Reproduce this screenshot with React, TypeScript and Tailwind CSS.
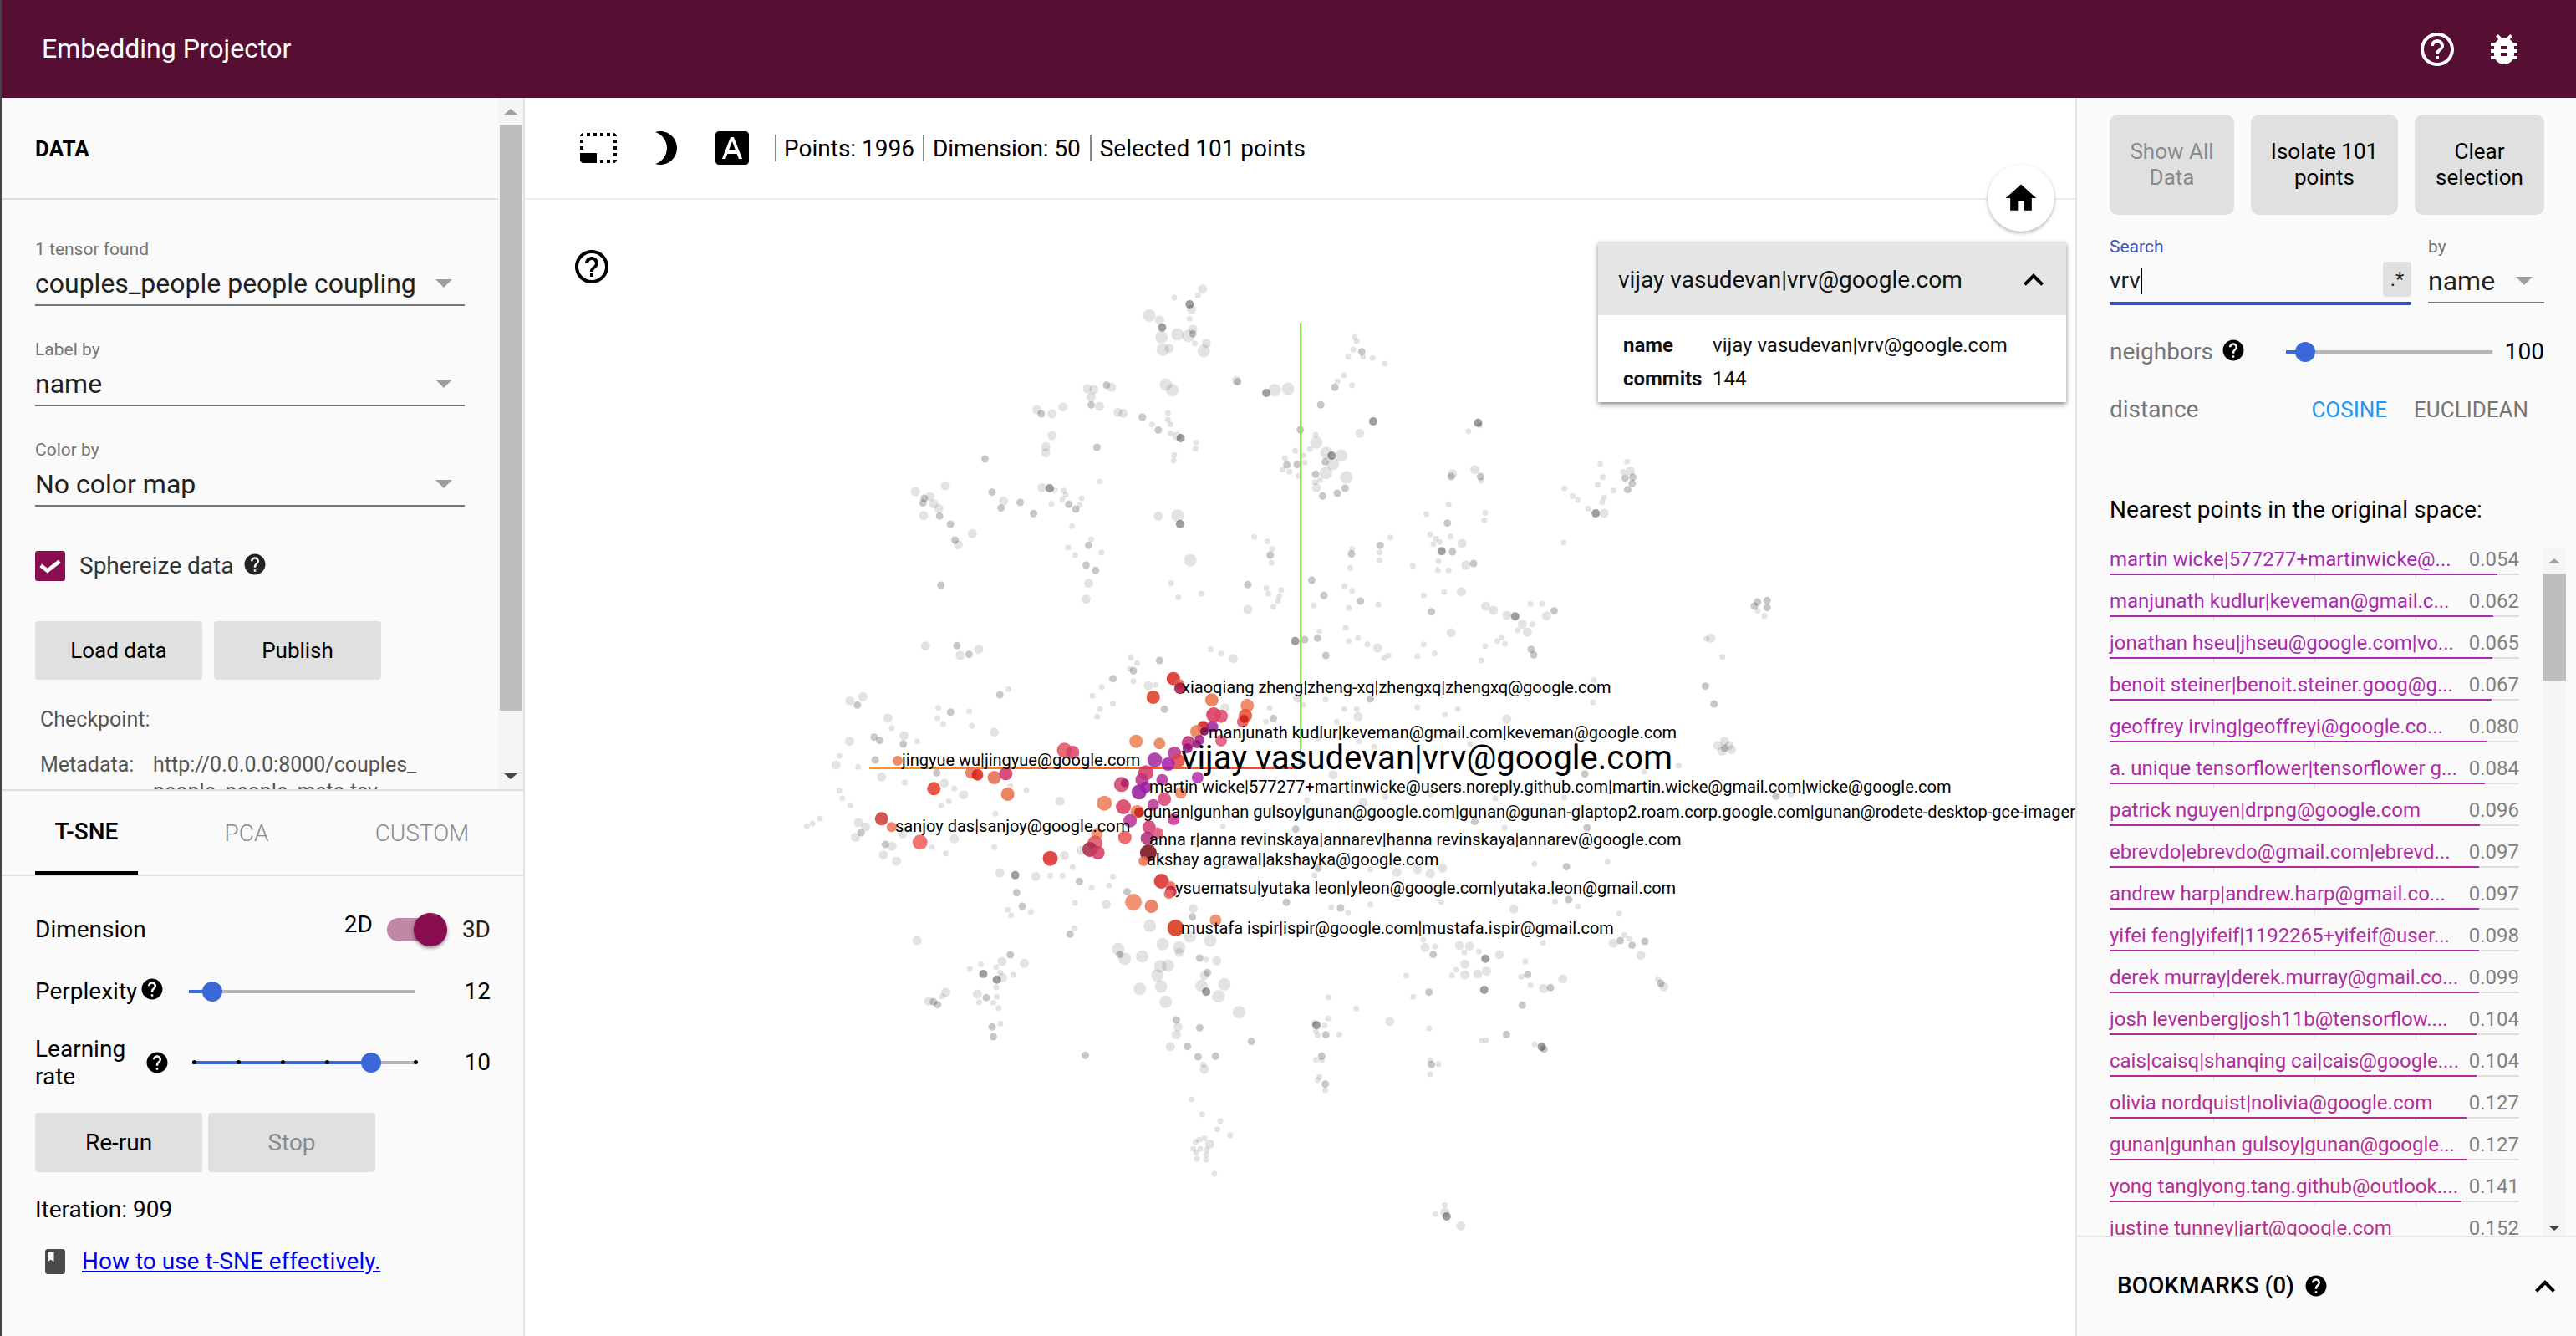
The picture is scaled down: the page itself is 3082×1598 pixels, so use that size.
import React from "react";

const P = {
  help: "M12 2C6.48 2 2 6.48 2 12s4.48 10 10 10 10-4.48 10-10S17.52 2 12 2zm1 17h-2v-2h2v2zm2.07-7.75l-.9.92C13.45 12.9 13 13.5 13 15h-2v-.5c0-1.1.45-2.1 1.17-2.83l1.24-1.26c.37-.36.59-.86.59-1.41 0-1.1-.9-2-2-2s-2 .9-2 2H8c0-2.21 1.79-4 4-4s4 1.79 4 4c0 .88-.36 1.68-.93 2.25z",
  helpOutline: "M11 18h2v-2h-2v2zm1-16C6.48 2 2 6.48 2 12s4.48 10 10 10 10-4.48 10-10S17.52 2 12 2zm0 18c-4.41 0-8-3.59-8-8s3.59-8 8-8 8 3.59 8 8-3.59 8-8 8zm0-14c-2.21 0-4 1.79-4 4h2c0-1.1.9-2 2-2s2 .9 2 2c0 2-3 1.75-3 5h2c0-2.25 3-2.5 3-5 0-2.21-1.79-4-4-4z",
  bug: "M20 8h-2.81c-.45-.78-1.07-1.45-1.82-1.96L17 4.41 15.59 3l-2.17 2.17C12.96 5.06 12.49 5 12 5c-.49 0-.96.06-1.41.17L8.41 3 7 4.41l1.62 1.63C7.88 6.55 7.26 7.22 6.81 8H4v2h2.09c-.05.33-.09.66-.09 1v1H4v2h2v1c0 .34.04.67.09 1H4v2h2.81c1.04 1.79 2.97 3 5.19 3s4.15-1.21 5.19-3H20v-2h-2.09c.05-.33.09-.66.09-1v-1h2v-2h-2v-1c0-.34-.04-.67-.09-1H20V8zm-6 8h-4v-2h4v2zm0-4h-4v-2h4v2z",
  home: "M10 20v-6h4v6h5v-8h3L12 3 2 12h3v8z",
  select: "M23 15h-2v2h2v-2zm0-4h-2v2h2v-2zm0 8h-2v2c1 0 2-1 2-2zM15 3h-2v2h2V3zm8 4h-2v2h2V7zm-2-4v2h2c0-1-1-2-2-2zM3 21h8v-6H1v4c0 1.1.9 2 2 2zM3 7H1v2h2V7zm12 12h-2v2h2v-2zm4-16h-2v2h2V3zm0 16h-2v2h2v-2zM3 3C2 3 1 4 1 5h2V3zm0 8H1v2h2v-2zm8-8H9v2h2V3zM7 3H5v2h2V3z",
  moon: "M9 2c-1.05 0-2.05.16-3 .46 4.06 1.27 7 5.06 7 9.54 0 4.48-2.94 8.27-7 9.54.95.3 1.95.46 3 .46 5.52 0 10-4.48 10-10S14.52 2 9 2z",
  font: "M9.93 13.5h4.14L12 7.98zM20 2H4c-1.1 0-2 .9-2 2v16c0 1.1.9 2 2 2h16c1.1 0 2-.9 2-2V4c0-1.1-.9-2-2-2zm-4.05 16.5l-1.14-3H9.17l-1.12 3H5.96l5.11-13h1.87l5.11 13h-2.09z",
  up: "M12 8l-6 6 1.41 1.41L12 10.83l4.59 4.58L18 14z",
  book: "M18 2H6c-1.1 0-2 .9-2 2v16c0 1.1.9 2 2 2h12c1.1 0 2-.9 2-2V4c0-1.1-.9-2-2-2zM6 4h5v8l-2.5-1.5L6 12V4z",
};

function Icon({ d, className }: { d: string; className: string }) {
  return (
    <svg viewBox="0 0 24 24" className={className} fill="currentColor">
      <path d={d} />
    </svg>
  );
}

function Caret({ className }: { className: string }) {
  return <div className={"w-0 h-0 border-l-[10px] border-r-[10px] border-t-[10px] border-l-transparent border-r-transparent border-t-[#9e9e9e] " + className} />;
}

function Field({ label, value }: { label: string; value: string }) {
  return (
    <div className="mb-[40px]">
      <div className="h-[24px] leading-[24px] text-[21px] text-[#757575]">{label}</div>
      <div className="h-[56px] pt-[4px] border-b-2 border-[#757575] flex items-center justify-between text-[32px] text-[#212121] leading-none">
        <span>{value}</span>
        <Caret className="mr-[15px]" />
      </div>
    </div>
  );
}

function Btn({ w, h, children, off, r }: { w: string; h: string; children: React.ReactNode; off?: boolean; r?: string }) {
  return (
    <div className={`${w} ${h} ${r ?? "rounded-[4px]"} bg-[#e0e0e0] flex items-center justify-center text-center text-[26px] leading-[31px] ${off ? "text-[#8a8a8a]" : "text-black"}`}>
      {children}
    </div>
  );
}

function Slider({ className, fill, thumb, d, ticks }: { className: string; fill: number; thumb: number; d: number; ticks?: number[] }) {
  return (
    <div className={"relative h-[4px] bg-[#b4b4b4] " + className}>
      <div className="absolute left-0 top-0 h-[4px] bg-[#3b68d9]" style={{ width: fill }} />
      {ticks?.map((t) => (
        <div key={t} className="absolute top-[-1px] w-[5px] h-[5px] rounded-full bg-black" style={{ left: t }} />
      ))}
      <div className="absolute rounded-full bg-[#3b68d9]" style={{ left: thumb - d / 2, top: 2 - d / 2, width: d, height: d }} />
    </div>
  );
}

const rows: [string, string, number, string][] = [
  ["martin wicke|577277+martinwicke@...", "0.054", 464, "#a92ab3"],
  ["manjunath kudlur|keveman@gmail.c...", "0.062", 459, "#a92ab3"],
  ["jonathan hseu|jhseu@google.com|vo...", "0.065", 458, "#a92ab0"],
  ["benoit steiner|benoit.steiner.goog@g...", "0.067", 457, "#aa2bad"],
  ["geoffrey irving|geoffreyi@google.co...", "0.080", 451, "#ac2baa"],
  ["a. unique tensorflower|tensorflower g...", "0.084", 449, "#ad2ca8"],
  ["patrick nguyen|drpng@google.com", "0.096", 443, "#af2da3"],
  ["ebrevdo|ebrevdo@gmail.com|ebrevd...", "0.097", 442, "#af2da3"],
  ["andrew harp|andrew.harp@gmail.co...", "0.097", 442, "#af2da3"],
  ["yifei feng|yifeif|1192265+yifeif@user...", "0.098", 442, "#b02da2"],
  ["derek murray|derek.murray@gmail.co...", "0.099", 442, "#b02da2"],
  ["josh levenberg|josh11b@tensorflow....", "0.104", 439, "#b12d9f"],
  ["cais|caisq|shanqing cai|cais@google....", "0.104", 439, "#b12d9f"],
  ["olivia nordquist|nolivia@google.com", "0.127", 427, "#b52e96"],
  ["gunan|gunhan gulsoy|gunan@google...", "0.127", 427, "#b52e96"],
  ["yong tang|yong.tang.github@outlook....", "0.141", 421, "#b82f92"],
  ["justine tunney|jart@google.com", "0.152", 415, "#ba308e"],
];

// dots transcribed per region: [x, y, kind]
type T = [number, number, number];
const z9: T[] = [[572,77,1],[565,100,0],[528,108,0],[552,132,4],[555,150,1],[552,184,0],[489,172,2],[505,188,1],[509,215,4],[508,250,2],[533,240,2],[550,245,2],[557,238,3],[557,222,1],[560,272,0],[578,272,1],[510,295,2],[520,290,1],[574,300,2],[810,250,0],[813,264,0],[808,295,0],[821,302,3],[823,320,0],[838,325,0],[800,320,0],[857,345,0],[793,387,0],[783,408,0],[806,422,0],[779,430,3],[627,410,3],[625,405,1],[672,450,4],[685,440,2],[706,435,2],[515,420,2],[525,440,2],[422,422,3],[430,430,1],[392,435,1],[402,438,1],[398,465,1],[398,493,3],[411,498,1],[354,500,1],[313,510,1],[320,525,3],[337,525,1],[440,520,1],[448,523,1],[478,537,3],[518,522,0],[518,546,0],[522,563,0],[493,563,0],[503,583,3],[522,595,0],[538,612,4],[532,605,1],[562,628,0],[561,650,0],[337,603,1],[327,643,1],[327,665,1],[407,645,3],[528,673,0],[527,693,0],[232,687,3],[757,493,3],[839,552,4],[818,595,1],[725,582,3],[749,600,0],[750,628,2],[717,658,0],[740,652,0],[766,665,2],[774,675,4],[789,675,2],[776,705,2],[764,697,3],[701,685,0],[704,708,3],[720,707,3],[732,700,0],[730,675,0],[697,725,0],[708,733,0],[722,748,0],[749,742,3],[765,737,2],[797,753,2],[756,763,0],[748,770,0],[750,790,1],[795,792,3],[760,820,3],[783,810,3],[1003,557,4],[1006,567,0],[988,587,0],[961,750,3],[963,740,1],[998,725,1],[1007,750,3],[1008,765,0],[1236,697,0],[1194,705,0],[1241,730,1],[1230,733,0],[1233,755,3],[1245,752,3],[1198,752,0],[1244,775,3],[1190,780,0],[1237,797,3],[1215,800,0],[1138,793,0],[1151,820,0],[1159,833,0],[1200,825,0],[1197,842,0],[1175,865,0],[1187,882,4],[1200,882,1],[123,804,1],[137,828,3],[146,822,1],[135,845,3],[152,848,1],[160,865,1],[136,890,1],[161,892,3],[178,921,3],[212,955,1],[185,978,3],[190,995,1],[170,783,1],[243,806,3],[261,838,1],[257,863,3],[287,843,3],[308,883,3],[321,790,1],[333,792,4],[341,798,0],[355,800,0],[358,815,0],[353,832,0],[383,828,0],[363,850,3],[380,852,0],[374,867,3],[336,848,0],[411,768,0],[503,892,1],[533,890,2],[537,920,4],[368,928,0],[398,975,0],[394,997,3],[362,1005,0],[414,1022,0],[373,1032,0],[390,1068,3],[405,1087,3],[553,1050,2],[163,1140,3],[394,1133,1],[390,1190,1],[523,1133,0],[534,1183,0],[570,1170,0],[643,1138,3],[672,1150,0],[695,1157,0],[675,1170,0],[692,1180,0],[690,1197,0],[683,1217,0],[643,1227,1],[653,967,0],[674,983,0],[681,1010,0],[678,1032,3],[680,1060,0],[743,1122,3],[762,1177,3],[746,1213,0],[794,1143,0],[806,1160,0],[819,1197,3],[847,1210,0],[801,1222,0],[805,1028,3],[806,1010,0],[803,1078,0],[850,997,3],[849,1022,0],[849,1050,0],[866,968,0],[901,1070,0],[922,885,0],[955,917,3],[957,850,0],[1014,880,0],[1013,907,0],[928,958,0],[937,973,0],[960,965,0],[933,992,0],[943,985,0],[978,990,1],[946,1018,4],[963,1020,3],[941,1054,0],[940,1085,0],[957,1087,0],[984,1068,1],[996,1062,3],[1137,987,0],[918,1177,0],[950,1165,0],[977,1163,1],[930,1235,3],[1015,1215,1],[1027,1230,1],[1048,1248,1],[1061,1252,4],[1072,1280,1],[1110,1250,1],[1122,1232,3],[1103,1207,0],[1085,1207,0],[1088,1280,0],[1065,1302,0],[1080,1308,1],[961,1310,1],[1440,1200,3],[1455,1195,3],[1435,1215,3],[1455,1220,3],[1440,1232,0],[1451,1250,0],[1367,1330,1],[1360,1333,0],[1385,1397,0],[717,1340,4],[732,1335,3],[755,1305,0],[752,1330,3],[796,1292,0],[801,1340,0],[815,1330,0],[830,1352,0],[846,1365,1],[765,1392,3],[863,1392,0],[856,1402,0],[908,1395,0],[935,1385,0],[918,1352,0],[1008,1410,0],[1014,1358,0],[1033,1340,0],[1040,1328,0],[1045,1350,0],[1086,1370,3],[1090,1390,3],[139,1358,1],[188,1357,3],[193,1392,1],[207,1388,3],[222,1370,1],[505,1410,3],[460,1400,0],[470,1420,0],[585,1370,0],[601,1385,0],[620,1403,1]];
const z6: T[] = [[952,30,3],[885,67,3],[830,95,3],[875,60,0],[885,105,0],[800,125,0],[775,157,0],[830,185,0],[795,205,0],[788,232,0],[968,205,3],[925,120,1],[945,118,0],[1130,200,1],[1260,238,3],[1240,250,0],[1250,200,0],[1340,190,0],[1325,165,1],[1520,168,3],[1483,205,0],[1487,232,1],[1400,170,0],[1450,205,0],[1430,250,0],[1380,310,0],[1420,440,1],[1490,320,0],[1530,340,0],[145,190,3],[125,175,1],[160,160,1],[227,237,1],[237,272,0],[190,305,3],[205,317,3],[124,320,1],[268,330,3],[270,300,1],[305,320,0],[360,237,0],[375,258,0],[395,215,3],[362,200,0],[445,212,0],[452,265,0],[512,287,1],[527,153,3],[550,133,0],[97,373,0],[88,405,1],[193,387,3],[147,412,0],[210,448,1],[272,468,0],[358,433,3],[378,470,1],[405,490,0],[430,512,1],[598,495,0],[555,480,0],[97,497,0],[105,525,0],[126,550,0],[390,535,0],[370,550,0],[688,535,1],[515,580,0],[148,612,1],[167,627,1],[155,648,3],[140,665,1],[45,597,0],[25,615,0],[10,625,0],[220,690,3],[238,697,1],[267,652,1],[405,670,1],[345,700,0],[382,722,0],[215,728,1],[250,750,1],[512,700,0],[527,793,1],[568,800,4],[623,805,1],[662,802,0],[700,730,1],[745,712,1],[722,772,0],[695,802,0],[740,823,3],[830,805,0],[773,845,0],[820,838,0],[868,860,3],[572,863,3],[548,925,0],[587,912,3],[610,932,0],[557,945,0],[812,905,1],[728,900,0],[930,982,1],[1045,920,1],[1043,950,3],[716,1013,3],[727,990,0],[305,1035,1],[963,1047,2],[845,1065,2],[848,1085,3],[865,1100,2],[910,1093,1],[1010,1060,1],[1035,1020,1],[1085,1035,0],[1062,1100,0],[1083,1150,3],[950,1160,1],[1110,1160,0],[557,1085,0],[535,1108,0],[593,1117,0],[447,1137,0],[477,1120,0],[485,1150,3],[520,1175,3],[530,1180,0],[563,1157,0],[1320,635,3],[1125,625,0],[1130,770,0],[1200,770,0],[1380,775,3],[1370,800,0],[1520,780,0],[1440,918,3],[1295,898,3],[1415,915,0],[1460,935,0],[1520,905,0],[1350,530,0],[1500,540,1],[1450,1075,0],[1400,1020,0],[1480,1020,0],[1445,1040,0]];
const z7: T[] = [[30,18,0],[100,22,0],[240,30,0],[355,12,0],[765,18,0],[728,122,3],[747,186,3],[483,180,0],[485,100,0],[100,198,0],[188,205,0],[160,225,0],[295,240,1],[215,330,0],[755,335,1],[780,335,1],[765,355,1],[770,320,1],[785,350,1],[770,345,3],[670,408,0],[465,437,3],[595,430,0],[882,517,3],[915,510,0],[420,522,0],[30,520,0],[130,510,0],[270,525,0],[225,608,3],[290,630,0],[470,630,3],[425,770,3],[515,752,0],[355,760,0],[55,790,1],[100,780,1],[128,795,1],[155,775,1],[152,897,0],[430,888,3],[450,912,0],[310,922,1],[400,895,0],[540,938,0],[545,1035,4],[568,1053,3],[597,1040,3],[587,1090,0],[530,1045,0],[248,1102,4],[280,1085,1],[205,1120,1],[185,1050,1],[213,1055,2],[120,1060,3],[135,1085,0],[373,1045,0],[335,1110,0],[183,1140,1],[203,1160,1],[240,1150,1],[75,1160,0],[340,1157,3],[418,1172,1],[630,1185,3]];
const z10: T[] = [[137,75,1],[398,52,3],[405,30,0],[296,126,3],[320,157,1],[282,150,1],[246,160,0],[227,177,0],[250,195,4],[272,170,0],[279,190,0],[273,215,4],[283,208,1],[301,198,0],[272,243,0],[186,260,1],[180,275,0],[165,295,3],[157,292,1],[172,305,3],[240,267,1],[255,280,3],[243,296,0],[273,277,0],[267,298,0],[276,317,0],[265,385,3],[279,373,0],[267,420,3],[480,105,2],[483,125,3],[491,140,2],[521,132,2],[556,88,2],[534,22,2],[584,100,2],[584,118,1],[602,60,2],[637,75,2],[552,167,2],[565,165,2],[547,200,2],[619,138,3],[630,143,0],[648,148,1],[632,190,3],[627,200,1],[622,237,2],[661,232,2],[553,240,2],[517,248,2],[630,259,4],[651,275,2],[561,295,2],[686,332,2],[579,360,3],[582,385,1],[579,413,1],[619,388,3],[569,455,1],[598,455,3],[707,437,3],[616,492,3],[646,490,3],[627,537,1],[424,487,3],[625,520,0],[838,278,0],[886,319,0],[971,201,0],[983,277,0],[1010,260,3],[818,379,4],[814,370,0],[832,380,0],[838,355,0],[817,400,0],[834,413,3],[857,412,0],[820,415,0],[943,365,1],[1010,390,0],[827,490,3],[817,503,0],[827,505,0],[1014,520,3],[1026,518,0],[1012,505,0],[1012,555,0],[823,565,0],[820,575,0],[833,590,3],[833,612,0],[1000,72,0],[1003,100,1],[1020,97,0],[1017,125,3],[1062,92,1],[1079,95,1],[1070,117,0],[1095,115,0],[1106,140,4],[1130,125,1],[1071,160,1],[1056,180,0],[1049,200,0],[1071,198,1],[1093,195,1],[1108,185,1],[1104,252,4],[1174,150,0],[1178,197,3],[1167,205,0],[1183,235,0],[1205,247,1],[1217,244,3],[1238,212,1],[1169,307,3],[1142,412,3],[1107,433,0],[1100,435,0],[1190,447,0],[1202,456,4],[1206,465,3],[1204,83,0],[1336,75,3],[1324,85,1],[1343,55,0],[1351,68,0],[1356,92,3],[1378,78,3],[1371,128,1],[1400,212,0],[1405,228,3],[1410,240,1],[605,645,0],[623,698,0],[654,722,0],[649,752,0],[671,773,0],[618,790,0],[627,785,0],[612,798,0],[636,805,1],[608,822,0],[620,822,0],[631,825,0],[613,835,0],[630,843,0],[614,858,0],[630,862,0],[644,912,0],[1037,1024,0],[1021,1057,0],[1040,1065,4],[1037,1050,1],[1064,1099,1]];

const kinds: [number, number][] = [[3.5, 0.11], [5.5, 0.11], [7.5, 0.11], [4.5, 0.22], [5, 0.38]];
// regions overlap, so each keeps only the band that no other region already covers
const grey = [
  ...z9.map(([x, y, k]) => [1000 + x / 1.307, 320 + y / 3, k]),
  ...z6.filter(([, y]) => y >= 60 && y < 960).map(([x, y, k]) => [960 + x / 2.24, 780 + y / 3, k]),
  ...z7.filter(([, y]) => y >= 60 && y < 960).map(([x, y, k]) => [1640 + x / 1.823, 780 + y / 3, k]),
  ...z10.map(([x, y, k]) => [1000 + x / 1.425, 1100 + y / 3, k]),
];

const hot: [number, number, number, string][] = [[992,95,8,"#d9281e"],[1008,115,6,"#e8604c"],[1010,130,7,"#a8123f"],[938,162,8,"#d93a1e"],[1095,172,8,"#e87048"],[1190,192,8,"#ec7a50"],[1100,225,9,"#d8305a"],[1120,230,8,"#e04468"],[1185,228,8,"#e05030"],[1178,250,7,"#e0505a"],[1182,240,5,"#d02018"],[1072,268,7,"#d01818"],[1055,285,8,"#ea7a50"],[1097,268,7,"#a0209a"],[1075,285,5,"#700a50"],[1062,315,6,"#a01e90"],[1032,325,8,"#c02878"],[1120,318,7,"#e0507a"],[1055,330,5,"#901a78"],[1030,345,6,"#901078"],[892,320,8,"#ec7f50"],[955,328,7,"#e87f50"],[700,352,9,"#e0505a"],[722,360,8,"#d84068"],[995,362,8,"#b83090"],[1005,390,8,"#e04040"],[942,387,9,"#a026a0"],[978,402,8,"#a818a8"],[253,390,6,"#ec7a50"],[450,433,7,"#e07050"],[467,440,7,"#d82018"],[512,450,8,"#e06a50"],[543,436,8,"#d03060"],[918,433,9,"#d83060"],[908,458,8,"#b83088"],[962,458,7,"#b030a0"],[1057,450,7,"#b030a8"],[853,475,9,"#d04068"],[862,470,5,"#a82070"],[900,502,9,"#901a9a"],[918,485,7,"#9a1ca8"],[350,490,8,"#e03a28"],[548,510,8,"#e87048"],[1012,505,7,"#ec8058"],[968,528,8,"#d84070"],[938,548,7,"#b83090"],[807,542,9,"#ec7a50"],[858,555,9,"#d83858"],[895,573,8,"#ee8050"],[900,575,6,"#c02020"],[993,600,7,"#c83090"],[876,605,8,"#b83090"],[210,598,8,"#c83838"],[237,628,6,"#ec7050"],[927,628,8,"#d03870"],[787,652,7,"#ec8050"],[862,665,8,"#ec5050"],[950,650,7,"#e05070"],[922,668,8,"#b02878"],[313,682,9,"#ec5a58"],[782,685,9,"#e05060"],[768,708,9,"#a82848"],[790,720,8,"#d03860"],[662,740,9,"#d82828"],[925,720,10,"#780818"],[912,750,6,"#ea7050"],[960,822,9,"#d82828"],[985,840,6,"#ec6058"],[985,860,7,"#c81838"],[980,868,6,"#e87060"],[885,897,10,"#ec8058"],[933,912,8,"#e87050"],[998,990,10,"#d83018"],[1105,962,7,"#ec8058"]];

const labels: [string, number, number, number?][] = [
  ["xiaoqiang zheng|zheng-xq|zhengxq|zhengxq@google.com", 1414, 822],
  ["manjunath kudlur|keveman@gmail.com|keveman@google.com", 1446, 876],
  ["jingyue wu|jingyue@google.com", 1079, 909],
  ["martin wicke|577277+martinwicke@users.noreply.github.com|martin.wicke@gmail.com|wicke@google.com", 1375, 941],
  ["gunan|gunhan gulsoy|gunan@google.com|gunan@gunan-glaptop2.roam.corp.google.com|gunan@rodete-desktop-gce-imager", 1368, 971],
  ["sanjoy das|sanjoy@google.com", 1071, 988],
  ["anna r|anna revinskaya|annarev|hanna revinskaya|annarev@google.com", 1375, 1004],
  ["akshay agrawal|akshayka@google.com", 1372, 1028],
  ["ysuematsu|yutaka leon|yleon@google.com|yutaka.leon@gmail.com", 1406, 1062],
  ["mustafa ispir|ispir@google.com|mustafa.ispir@gmail.com", 1413, 1110],
  ["vijay vasudevan|vrv@google.com", 1413, 907, 1],
];

function Plot() {
  return (
    <div className="relative flex-1 overflow-hidden bg-white">
      <svg className="absolute inset-0 w-full h-full" viewBox="628 239 1853 1359">
        <defs>
          <linearGradient id="axis" x1="0" x2="1" y1="0" y2="0">
            <stop offset="0" stopColor="#ff9322" />
            <stop offset="1" stopColor="#f4412b" />
          </linearGradient>
        </defs>
        {grey.map(([x, y, k], i) => (
          <circle key={i} cx={x} cy={y} r={kinds[k][0]} fill="#000" fillOpacity={kinds[k][1]} />
        ))}
        <rect x="1039" y="917" width="516" height="3" fill="url(#axis)" />
        <rect x="1554" y="386" width="2" height="509" fill="#66ff1a" />
        <rect x="1554" y="895" width="2" height="22" fill="#7cc8f0" />
        {hot.map(([x, y, r, c], i) => (
          <circle key={i} cx={960 + x / 2.24} cy={780 + y / 3} r={r} fill={c} fillOpacity={0.85} />
        ))}
      </svg>
      {labels.map(([t, x, y, big]) => (
        <div
          key={t}
          className={`absolute whitespace-nowrap text-black ${big ? "text-[40px] leading-[48px]" : "text-[20px] leading-[24px]"}`}
          style={{ left: x - 628, top: y - 239 - (big ? 24 : 12) }}
        >
          {t}
        </div>
      ))}
      <Icon d={P.helpOutline} className="absolute left-[56px] top-[56px] w-[48px] h-[48px] text-black" />
      <div className="absolute right-[11px] top-[50px] w-[560px] h-[192px] bg-white shadow-[0_3px_6px_rgba(0,0,0,0.45)]">
        <div className="h-[88px] bg-[#e6e6e6] flex items-center justify-between pl-[24px] pr-[15px] pt-[4px] text-[28px] text-[#111]">
          <span>vijay vasudevan|vrv@google.com</span>
          <Icon d={P.up} className="w-[48px] h-[48px] text-black" />
        </div>
        <div className="pt-[16px] pl-[30px] text-[24px] leading-[40px] text-[#111]">
          <div className="flex"><span className="w-[107px] font-bold">name</span><span>vijay vasudevan|vrv@google.com</span></div>
          <div className="flex"><span className="w-[107px] font-bold">commits</span><span>144</span></div>
        </div>
      </div>
    </div>
  );
}

function Left() {
  return (
    <div className="w-[626px] shrink-0 bg-[#fafafa] border-r-2 border-[#e4e4e4] flex flex-col">
      <div className="h-[829px] flex border-b-2 border-[#e0e0e0] overflow-hidden">
        <div className="flex-1 overflow-hidden">
          <div className="h-[122px] border-b-2 border-[#e0e0e0] pl-[40px] flex items-center pt-[2px] text-[26px] font-bold text-black">DATA</div>
          <div className="pt-[47px] pl-[40px] pr-[40px]">
            <Field label="1 tensor found" value="couples_people people coupling" />
            <Field label="Label by" value="name" />
            <Field label="Color by" value="No color map" />
            <div className="flex items-center h-[36px] mt-[53px]">
              <div className="w-[36px] h-[36px] rounded-[3px] bg-[#880e4f] flex items-center justify-center">
                <svg viewBox="0 0 24 24" className="w-[30px] h-[30px]" fill="none" stroke="#fff" strokeWidth="3.6"><path d="M3 11.5l6.5 5L21 7.5" /></svg>
              </div>
              <span className="ml-[17px] text-[28px] text-[#333]">Sphereize data</span>
              <Icon d={P.help} className="ml-[11px] -mt-[4px] w-[30px] h-[30px] text-[#222]" />
            </div>
            <div className="flex gap-[14px] mt-[48px]">
              <Btn w="w-[200px]" h="h-[70px]">Load data</Btn>
              <Btn w="w-[200px]" h="h-[70px]">Publish</Btn>
            </div>
            <div className="mt-[32px] pl-[6px] text-[25px] leading-[32px] text-[#555]">
              <div>Checkpoint:</div>
              <div className="flex mt-[22px]">
                <span className="w-[135px] shrink-0">Metadata:</span>
                <span>http://0.0.0.0:8000/couples_<br />people_people_meta.tsv</span>
              </div>
            </div>
          </div>
        </div>
        <div className="w-[30px] bg-[#f5f5f5] flex flex-col items-center">
          <div className="h-[32px] flex items-center justify-center"><div className="w-0 h-0 border-l-[8px] border-r-[8px] border-b-[7px] border-l-transparent border-r-transparent border-b-[#a0a0a0]" /></div>
          <div className="w-[26px] h-[701px] bg-[#bdbdbd]" />
          <div className="flex-1 flex items-end pb-[12px]"><div className="w-0 h-0 border-l-[8px] border-r-[8px] border-t-[7px] border-l-transparent border-r-transparent border-t-[#444]" /></div>
        </div>
      </div>
      <div className="flex-1 text-[28px] text-black">
        <div className="h-[102px] border-b-2 border-[#e4e4e4] flex pl-[40px]">
          <div className="w-[123px] h-[100px] -mb-[1px] border-b-4 border-black flex items-center justify-center font-medium pt-[1px]">T-SNE</div>
          <div className="w-[260px] flex items-center justify-center text-[#8a8a8a] font-light pt-[1px]">PCA</div>
          <div className="w-[160px] flex items-center justify-center text-[#8a8a8a] font-light pt-[1px]">CUSTOM</div>
        </div>
        <div className="pl-[40px] pr-[39px]">
          <div className="mt-[44px] h-[40px] flex items-center justify-between">
            <span>Dimension</span>
            <div className="flex items-center">
              <span className="-mt-[12px]">2D</span>
              <div className="relative w-[72px] h-[28px] ml-[17px] mr-[18px]">
                <div className="w-[60px] h-[28px] rounded-full bg-[#c088a6]" />
                <div className="absolute right-0 top-[-6px] w-[40px] h-[40px] rounded-full bg-[#880e4f] shadow-[0_2px_4px_rgba(0,0,0,0.45)]" />
              </div>
              <span className="text-[#222]">3D</span>
            </div>
          </div>
          <div className="mt-[34px] h-[40px] flex items-center">
            <span>Perplexity</span>
            <Icon d={P.help} className="ml-[3px] -mt-[6px] w-[30px] h-[30px] text-black" />
            <Slider className="ml-[29px] w-[270px]" fill={28} thumb={28} d={24} />
            <span className="ml-auto">12</span>
          </div>
          <div className="mt-[32px] h-[66px] flex items-center">
            <span className="w-[131px] leading-[33px]">Learning rate</span>
            <Icon d={P.help} className="w-[30px] h-[30px] text-black" />
            <Slider className="ml-[27px] w-[268px]" fill={214} thumb={214} d={24} ticks={[0, 53, 106, 159, 265]} />
            <span className="ml-auto">10</span>
          </div>
          <div className="flex gap-[7px] mt-[27px]">
            <Btn w="w-[200px]" h="h-[71px]"><span className="text-[28px]">Re-run</span></Btn>
            <Btn w="w-[200px]" h="h-[71px]" off><span className="text-[28px]">Stop</span></Btn>
          </div>
          <div className="mt-[29px] h-[32px] leading-[32px]">Iteration: 909</div>
          <div className="mt-[28px] flex items-center h-[36px]">
            <Icon d={P.book} className="ml-[6px] w-[36px] h-[36px] text-[#4a4a4a]" />
            <a className="ml-[14px] text-[#0000ee] underline" href="#">How to use t-SNE effectively.</a>
          </div>
        </div>
      </div>
    </div>
  );
}

function Right() {
  return (
    <div className="flex-1 bg-[#fafafa] border-l-2 border-[#e4e4e4] flex flex-col min-w-0">
      <div className="pl-[39px] pr-[38px]">
        <div className="flex gap-[20px] mt-[20px]">
          <Btn w="w-[149px]" h="h-[120px]" r="rounded-[10px]" off>Show All<br />Data</Btn>
          <Btn w="w-[176px]" h="h-[120px]" r="rounded-[10px]">Isolate 101<br />points</Btn>
          <Btn w="w-[155px]" h="h-[120px]" r="rounded-[10px]">Clear<br />selection</Btn>
        </div>
        <div className="flex mt-[26px]">
          <div className="w-[361px]">
            <div className="h-[24px] leading-[24px] text-[21px] text-[#3f51b5]">Search</div>
            <div className="h-[58px] border-b-4 border-[#3f51b5] flex items-center justify-between pt-[4px]">
              <div className="flex items-center text-[28px] text-[#222]"><span>vrv</span><span className="w-[2px] h-[32px] bg-black" /></div>
              <div className="w-[34px] h-[42px] -mt-[4px] rounded-[4px] bg-[#e0e0e0] flex items-center justify-center text-[24px] text-[#222]">.*</div>
            </div>
          </div>
          <div className="ml-[20px] w-[139px]">
            <div className="h-[24px] leading-[24px] text-[21px] text-[#757575]">by</div>
            <div className="h-[56px] pt-[3px] border-b-2 border-[#757575] flex items-center justify-between text-[32px] text-[#212121]">
              <span>name</span>
              <Caret className="mr-[14px]" />
            </div>
          </div>
        </div>
        <div className="mt-[36px] h-[40px] flex items-center text-[28px]">
          <span className="text-[#757575]">neighbors</span>
          <Icon d={P.help} className="ml-[9px] -mt-[4px] w-[30px] h-[30px] text-black" />
          <Slider className="ml-[48px] w-[247px]" fill={23} thumb={23} d={24} />
          <span className="ml-auto text-black">100</span>
        </div>
        <div className="mt-[29px] h-[40px] flex items-center text-[28px] text-[#757575]">
          <span>distance</span>
          <span className="ml-[135px] text-[#2196f3] text-[26px]">COSINE</span>
          <span className="ml-[32px] text-[26px]">EUCLIDEAN</span>
        </div>
        <div className="mt-[82px] h-[36px] leading-[36px] text-[28px] text-black">Nearest points in the original space:</div>
      </div>
      <div className="mt-[27px] h-[823px] flex pl-[39px] overflow-hidden">
        <div className="w-[490px]">
          {rows.map(([t, v, w, c]) => (
            <div key={t} className="h-[50px]">
              <div className="h-[31px] pb-[4px] flex justify-between items-center text-[24px] leading-[28px]">
                <span style={{ color: c }}>{t}</span>
                <span className="text-[#808080]">{v}</span>
              </div>
              <div className="h-[2px] bg-[#ddd]"><div className="h-[2px]" style={{ width: w, background: c }} /></div>
              <div className="flex pl-[124px] gap-[120px]">
                <div className="w-[1px] h-[5px] bg-[#ddd]" />
                <div className="w-[1px] h-[5px] bg-[#ddd]" />
                <div className="w-[1px] h-[5px] bg-[#ddd]" />
              </div>
            </div>
          ))}
        </div>
        <div className="ml-[28px] w-[28px] bg-[#f5f5f5] flex flex-col items-center">
          <div className="h-[31px] flex items-center justify-center"><div className="w-0 h-0 border-l-[7px] border-r-[7px] border-b-[6px] border-l-transparent border-r-transparent border-b-[#a0a0a0]" /></div>
          <div className="w-full h-[128px] bg-[#bdbdbd]" />
          <div className="flex-1 flex items-end pb-[6px]"><div className="w-0 h-0 border-l-[7px] border-r-[7px] border-t-[6px] border-l-transparent border-r-transparent border-t-[#444]" /></div>
        </div>
      </div>
      <div className="flex-1 border-t-2 border-[#e4e4e4] flex items-center pl-[48px] pr-[13px] text-[28px] font-medium text-black">
        <span className="-mt-[2px]">BOOKMARKS (0)</span>
        <Icon d={P.help} className="ml-[11px] -mt-[2px] w-[30px] h-[30px] text-black" />
        <Icon d={P.up} className="ml-auto w-[48px] h-[48px] text-black" />
      </div>
    </div>
  );
}

export default function App() {
  return (
    <div className="w-[3082px] h-[1598px] flex flex-col overflow-hidden bg-white border-l-2 border-[#444]" style={{ fontFamily: "Roboto, sans-serif" }}>
      <div className="h-[117px] shrink-0 bg-[#560e33] flex items-center justify-between pl-[48px] pr-[62px]">
        <span className="text-[32px] text-white -mt-[2px]">Embedding Projector</span>
        <div className="flex gap-[32px] text-white">
          <Icon d={P.helpOutline} className="w-[48px] h-[48px]" />
          <Icon d={P.bug} className="w-[48px] h-[48px]" />
        </div>
      </div>
      <div className="flex-1 flex min-h-0">
        <Left />
        <div className="w-[1855px] shrink-0 flex flex-col relative">
          <div className="h-[122px] shrink-0 border-b-2 border-[#eeeeee] bg-white flex items-center pl-[64px] text-[28px] text-black">
            <Icon d={P.select} className="w-[48px] h-[48px]" />
            <Icon d={P.moon} className="ml-[32px] w-[48px] h-[48px]" />
            <Icon d={P.font} className="ml-[32px] w-[48px] h-[48px]" />
            <div className="ml-[27px] w-[2px] h-[32px] bg-[#888]" />
            <span className="ml-[9px] pt-[1px]">Points: 1996</span>
            <div className="ml-[10px] w-[2px] h-[32px] bg-[#888]" />
            <span className="ml-[10px] pt-[1px] tracking-[-0.1px]">Dimension: 50</span>
            <div className="ml-[11px] w-[2px] h-[32px] bg-[#888]" />
            <span className="ml-[10px] pt-[1px]">Selected 101 points</span>
          </div>
          <Plot />
          <div className="absolute left-[1750px] top-[80px] w-[80px] h-[80px] rounded-full bg-white shadow-[0_2px_4px_rgba(0,0,0,0.3)] flex items-center justify-center z-10">
            <Icon d={P.home} className="w-[44px] h-[44px] text-black" />
          </div>
        </div>
        <Right />
      </div>
    </div>
  );
}
